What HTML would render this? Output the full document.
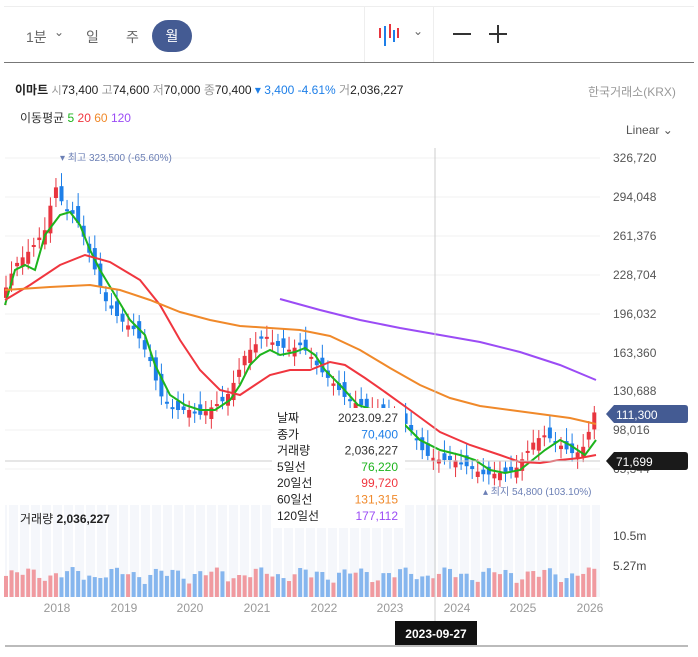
<!DOCTYPE html>
<html><head><meta charset="utf-8"><style>
body{margin:0;width:698px;height:657px;background:#fff;font-family:"Liberation Sans","Noto Sans CJK KR",sans-serif;overflow:hidden;position:relative}
.a{position:absolute;white-space:nowrap}
</style></head><body>
<div class="a" style="left:4px;top:6px;width:690px;height:1px;background:#eee"></div>
<div class="a" style="left:4px;top:62px;width:690px;height:1px;background:#777"></div>
<div class="a" style="left:364px;top:7px;width:1px;height:55px;background:#eee"></div>
<div class="a" style="left:433px;top:7px;width:1px;height:55px;background:#eee"></div>
<div class="a" style="left:26px;top:27px;font-size:14px;color:#666">1분</div>
<div class="a" style="left:54px;top:25px;font-size:12px;color:#666">&#8964;</div>
<div class="a" style="left:86px;top:27px;font-size:14px;color:#666">일</div>
<div class="a" style="left:126px;top:27px;font-size:14px;color:#666">주</div>
<div class="a" style="left:152px;top:20px;width:40px;height:32px;border-radius:16px;background:#445b93;color:#fff;font-size:14px;text-align:center;line-height:32px">월</div>
<svg class="a" style="left:376px;top:22px" width="24" height="26"><rect x="3" y="6" width="2" height="10" fill="#e8353f"/><rect x="8" y="4" width="2" height="20" fill="#1e7fe8"/><rect x="13" y="2" width="2" height="14" fill="#e8353f"/><rect x="17" y="8" width="2" height="12" fill="#1e7fe8"/><rect x="21" y="6" width="2" height="10" fill="#e8353f"/></svg>
<div class="a" style="left:413px;top:24px;font-size:12px;color:#666">&#8964;</div>
<div class="a" style="left:453px;top:33px;width:18px;height:1.5px;background:#333"></div>
<div class="a" style="left:489px;top:33px;width:18px;height:1.5px;background:#333"></div>
<div class="a" style="left:497px;top:25px;width:1.5px;height:18px;background:#333"></div>
<div class="a" style="left:15px;top:81px;font-size:12px;color:#222"><b>이마트</b> <span style="color:#999;font-size:11px">시</span>73,400 <span style="color:#999">고</span>74,600 <span style="color:#999">저</span>70,000 <span style="color:#999">종</span>70,400 <span style="color:#1e7fe8">▾ 3,400 -4.61%</span> <span style="color:#999">거</span>2,036,227</div>
<div class="a" style="left:588px;top:83px;font-size:12px;color:#999">한국거래소(KRX)</div>
<div class="a" style="left:20px;top:109px;font-size:12px;color:#333">이동평균 <span style="color:#1db41d">5</span> <span style="color:#f0363f">20</span> <span style="color:#f0892a">60</span> <span style="color:#9b4cf5">120</span></div>
<div class="a" style="left:626px;top:123px;font-size:12px;color:#555">Linear &#8964;</div>
<svg class="a" style="left:0;top:0" width="698" height="657" id="s"></svg>
<script>
const s=document.getElementById('s');let h='';
const grid=[158,197,236,275,314,353,391,430,469];
const lab=['326,720','294,048','261,376','228,704','196,032','163,360','130,688','98,016','65,344'];
grid.forEach((y,i)=>{h+=`<line x1="5" x2="600" y1="${y}" y2="${y}" stroke="#f0f0f0"/>`;h+=`<text x="613" y="${y+4}" font-size="12" fill="#555">${lab[i]}</text>`});
h+=`<rect x="5" y="505" width="595" height="92" fill="#f5f7fb"/>`;
for(let x=8;x<600;x+=11)h+=`<line x1="${x}" x2="${x}" y1="505" y2="597" stroke="#fff" stroke-width="2"/>`;
const P=[[5,290],[15,265],[30,250],[45,230],[55,185],[65,210],[75,215],[85,240],[95,270],[105,300],[120,320],[135,330],[150,360],[160,395],[175,410],[190,410],[200,415],[215,405],[225,400],[235,380],[245,355],[255,345],[265,335],[275,345],[290,350],[300,345],[310,355],[320,370],[335,385],[347,400],[375,410],[408,425],[425,455],[440,460],[455,460],[470,468],[485,475],[500,473],[515,470],[525,455],[535,440],[545,435],[560,445],[575,455],[585,445],[595,410]];
function yAt(x){if(x<=P[0][0])return P[0][1];for(let i=0;i<P.length-1;i++){if(x>=P[i][0]&&x<=P[i+1][0]){let t=(x-P[i][0])/(P[i+1][0]-P[i][0]);return P[i][1]+t*(P[i+1][1]-P[i][1]);}}return P[P.length-1][1];}
let k=0;
for(let x=6;x<=596;x+=5.55){k++;
 let c=yAt(x),o=yAt(x-5.55)+Math.sin(k*1.7)*8;
 let up=c<o;let col=up?'#e8353f':'#1e7fe8';
 let t=Math.min(c,o),b=Math.max(c,o);if(b-t<2)b=t+2;
 h+=`<line x1="${x}" x2="${x}" y1="${t-5-Math.abs(Math.sin(k))*8}" y2="${b+4+Math.abs(Math.cos(k))*6}" stroke="${col}"/>`;
 h+=`<rect x="${x-2}" y="${t}" width="4" height="${b-t}" fill="${col}"/>`;
 let v=10+Math.abs(Math.sin(k*2.3))*10+Math.abs(Math.sin(k*0.37))*10;
 if(x>595)v=73;
 h+=`<rect x="${x-2}" y="${597-v}" width="4" height="${v}" fill="${up?'#f09aa0':'#86b6ee'}"/>`;
}
function pl(pts,c){h+=`<polyline fill="none" stroke="${c}" stroke-width="2" points="${pts}"/>`}
pl("5,305 15,270 25,265 35,270 45,235 60,215 70,212 80,225 90,250 100,270 115,295 130,320 145,335 155,365 170,395 185,405 200,410 215,410 230,400 240,385 250,365 260,355 270,350 280,355 295,352 305,348 315,355 325,370 340,385 358,405 380,412 405,425 420,440 440,450 460,455 475,460 490,470 505,473 520,470 530,462 545,450 560,440 570,445 585,455 596,440",'#1db41d');
pl("5,300 30,285 60,265 85,255 110,262 140,280 160,305 180,340 200,370 220,390 240,395 255,385 270,375 290,370 310,370 330,362 345,365 365,378 385,392 410,410 440,432 470,445 500,455 520,462 540,463 560,460 580,458 596,455",'#f0363f');
pl("5,290 50,287 90,285 120,290 150,300 180,312 210,320 240,326 270,328 300,330 330,336 360,350 390,368 420,385 450,398 480,406 510,410 540,414 570,418 596,424",'#f0892a');
pl("280,299 320,310 360,320 400,328 440,335 480,342 520,352 560,365 596,380",'#9b4cf5');
h+=`<line x1="435" x2="435" y1="148" y2="625" stroke="#ccc"/><line x1="5" x2="600" y1="461" y2="461" stroke="#ccc"/>`;
h+=`<text x="60" y="161" font-size="10" fill="#6b7fb5">▾ 최고 323,500 (-65.60%)</text>`;
h+=`<text x="483" y="495" font-size="10" fill="#6b7fb5">▴ 최지 54,800 (103.10%)</text>`;
h+=`<text x="613" y="540" font-size="12" fill="#444">10.5m</text><text x="613" y="570" font-size="12" fill="#444">5.27m</text>`;
[['2018',57],['2019',124],['2020',190],['2021',257],['2022',324],['2023',390],['2024',457],['2025',523],['2026',590]].forEach(a=>h+=`<text x="${a[1]}" y="612" font-size="12" fill="#999" text-anchor="middle">${a[0]}</text>`);
h+=`<path d="M606,414 L614,405 L685,405 Q688,405 688,408 L688,420 Q688,423 685,423 L614,423 Z" fill="#445b93"/><text x="616" y="419" font-size="12" fill="#fff">111,300</text>`;
h+=`<path d="M606,461 L614,452 L685,452 Q688,452 688,455 L688,467 Q688,470 685,470 L614,470 Z" fill="#1a1a1a"/><text x="616" y="466" font-size="12" fill="#fff">71,699</text>`;
h+=`<rect x="395" y="621" width="82" height="24" fill="#111"/><text x="436" y="638" font-size="12" font-weight="bold" fill="#fff" text-anchor="middle">2023-09-27</text>`;
h+=`<line x1="5" x2="688" y1="646" y2="646" stroke="#777"/>`;
h+=`<rect x="272" y="408" width="133" height="120" fill="#fff"/>`;
const tt=[['날짜','2023.09.27','#333'],['종가','70,400','#1e7fe8'],['거래량','2,036,227','#333'],['5일선','76,220','#1db41d'],['20일선','99,720','#f0363f'],['60일선','131,315','#f0892a'],['120일선','177,112','#9b4cf5']];
tt.forEach((r,i)=>{let y=422+i*16.3;h+=`<text x="277" y="${y}" font-size="12" fill="#222">${r[0]}</text><text x="398" y="${y}" font-size="12" fill="${r[2]}" text-anchor="end">${r[1]}</text>`});
h+=`<text x="20" y="523" font-size="12" fill="#222">거래량 <tspan font-weight="bold">2,036,227</tspan></text>`;
s.innerHTML=h;
</script>
</body></html>
